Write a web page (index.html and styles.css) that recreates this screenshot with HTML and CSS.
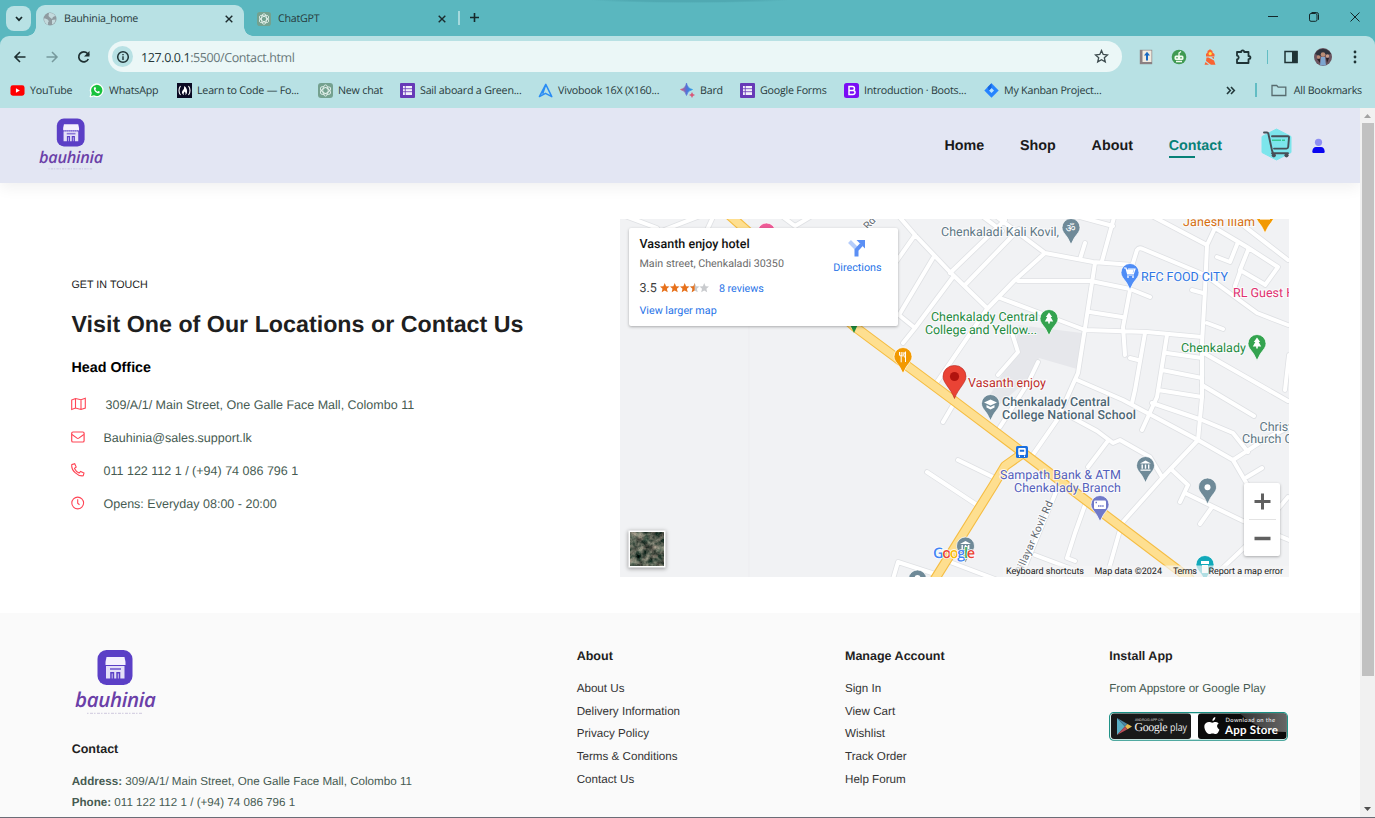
FILE: index.html
```html
<!DOCTYPE html>
<html lang="en">
<head>
<meta charset="utf-8">
<title>Bauhinia_home</title>
<link rel="stylesheet" href="styles.css">
</head>
<body>
<svg class="defs" width="0" height="0" aria-hidden="true">
  <symbol id="logo" viewBox="0 0 84 68">
    <rect x="23.500" y="2" width="35" height="35" rx="9" fill="#5b3fc6"/>
    <path d="M32.500 9h18l1 5v3h-20v-3z" fill="#f4f0fd"/>
    <path d="M32 18h18.500v12.500h-4.200v-6.500h-4v6.500h-2.100v-6.500h-4v6.500H32z" fill="#e4dff8"/>
    <path d="M31.500 17.500h20" stroke="#5b3fc6" stroke-width="1" stroke-dasharray="1.500 1"/>
    <path d="M36 21h11" stroke="#8a76d8" stroke-width="2"/>
    <path d="M38.200 25.500v5M44.300 25.500v5" stroke="#cfc6f1" stroke-width="1"/>
    <text x="1" y="58.500" class="logo-word" textLength="81" lengthAdjust="spacing">bauhinia</text>
    <path d="M13 65.300h56" stroke="#8e7fb5" stroke-width="1" stroke-dasharray="1.500 1.500 3 1" opacity=".4"/>
  </symbol>
  <symbol id="openai" viewBox="0 0 15 15">
    <rect width="15" height="15" rx="3" fill="#74a18f"/>
    <g fill="none" stroke="#e6f3ee" stroke-width=".9"><ellipse cx="7.500" cy="7.500" rx="2.700" ry="5.600"/><ellipse cx="7.500" cy="7.500" rx="2.700" ry="5.600" transform="rotate(60 7.500 7.500)"/><ellipse cx="7.500" cy="7.500" rx="2.700" ry="5.600" transform="rotate(120 7.500 7.500)"/></g>
  </symbol>
  <symbol id="forms" viewBox="0 0 15 15">
    <rect width="15" height="15" rx="1" fill="#673ab7"/><path d="M3 3h9v9H3z" fill="#f3effb"/>
    <path d="M3 5.700h9M3 8.700h9M5.300 3v9" stroke="#673ab7" stroke-width=".8"/>
  </symbol>
  <symbol id="close" viewBox="0 0 10 10"><path d="M1.700 1.700l6.600 6.600M8.300 1.700l-6.600 6.600" stroke="#1c2b2d" stroke-width="1.400"/></symbol>
  <symbol id="pin" viewBox="-10 -10 20 28">
    <path d="M0-9a9 9 0 0 1 9 9c0 5-5 8-7 13L0 17l-2-4C-4 8-9 5-9 0a9 9 0 0 1 9-9z"/>
  </symbol>
</svg>

<div class="window">
  <div class="tabstrip">
    <button class="tab-search"><svg width="10" height="8" viewBox="0 0 10 8"><path d="M2 2l3 3.200L8 2" fill="none" stroke="#17282a" stroke-width="1.700"/></svg></button>
    <div class="tab tab-active">
      <svg width="14" height="14" viewBox="0 0 14 14"><circle cx="7" cy="7" r="6.500" fill="#8f9ba0"/><path d="M1 6.500c2 0 3 .5 4 1.500s1 1.500 0 2.500v2.500C2.500 12 1 9.500 1 6.500zM6 1c3-.5 5 .5 6.300 3L10 5 9 7 7 5.500 5.500 4z M9 8l3.500-.5C12.500 10 11 12 9 12.500z" fill="#c3dadd"/></svg>
      <span class="tab-name">Bauhinia_home</span>
      <svg width="10" height="10"><use href="#close"/></svg>
    </div>
    <div class="tab">
      <svg width="14" height="14"><use href="#openai"/></svg>
      <span class="tab-name">ChatGPT</span>
      <svg width="10" height="10"><use href="#close"/></svg>
    </div>
    <span class="tab-sep"></span>
    <svg class="new-tab" width="11" height="11" viewBox="0 0 11 11"><path d="M5.500 1v9M1 5.500h9" stroke="#16292b" stroke-width="1.600"/></svg>
    <div class="win-buttons">
      <svg width="10" height="12" viewBox="0 0 10 12"><path d="M0 5.500h10" stroke="#14282a" stroke-width="1"/></svg>
      <svg width="10" height="12" viewBox="0 0 10 12"><rect x=".5" y="2.500" width="7.500" height="7.800" rx="1.500" fill="none" stroke="#14282a"/><path d="M2.500 1.500h5Q9.500 1.500 9.500 3.500v5.300" fill="none" stroke="#14282a"/></svg>
      <svg width="10" height="12" viewBox="0 0 10 12"><path d="M.5 1.500l9 9M9.500 1.500l-9 9" stroke="#14282a" stroke-width="1"/></svg>
    </div>
  </div>

  <div class="toolbar">
    <div class="nav-buttons">
      <svg width="14" height="14" viewBox="0 0 14 14"><path d="M12.500 7H2M7 2L2 7l5 5" fill="none" stroke="#1d2f31" stroke-width="1.600"/></svg>
      <svg width="14" height="14" viewBox="0 0 14 14"><path d="M1.500 7H12M7 2l5 5-5 5" fill="none" stroke="#76999c" stroke-width="1.500"/></svg>
      <svg width="14" height="14" viewBox="0 0 14 14"><path d="M11.300 9A5 5 0 1 1 10.500 3.500L12 5" fill="none" stroke="#1d2f31" stroke-width="1.700"/><path d="M12.500 1v5.500H7z" fill="#1d2f31"/></svg>
    </div>
    <div class="omnibox">
      <span class="info"><svg width="14" height="14" viewBox="0 0 14 14"><circle cx="7" cy="7" r="5.300" fill="none" stroke="#1f3335" stroke-width="1.500"/><path d="M7 6.300v3.700M7 4v1.300" stroke="#1f3335" stroke-width="1.400"/></svg></span>
      <span class="url"><b>127.0.0.1</b>:5500/Contact.html</span>
      <svg width="15" height="15" viewBox="0 0 15 15"><path d="M7.500 1.500l1.700 4 4.300.4-3.200 2.800 1 4.200-3.800-2.200-3.800 2.200 1-4.200L1.500 5.900l4.300-.4z" fill="none" stroke="#3e4c4f" stroke-width="1.300"/></svg>
    </div>
    <div class="extensions">
      <svg width="14" height="16" viewBox="0 0 14 16"><rect x=".8" y=".8" width="12.400" height="14.400" fill="#8b8083"/><rect x="3.500" y="1.500" width="9" height="11.500" fill="#f0ebe0"/><path d="M8 5v6.500" stroke="#1769c2" stroke-width="2"/><path d="M8 2.700l3 3.800H5z" fill="#1769c2"/></svg>
      <svg width="16" height="16" viewBox="0 0 16 16"><circle cx="8" cy="8" r="7.300" fill="#3f9a52"/><rect x="3.500" y="6.500" width="9" height="4.500" rx="1.500" fill="#f2fbf1"/><path d="M8 7V4l2-1.500M5 12.500h6" stroke="#f2fbf1" stroke-width="1.300" fill="none"/><path d="M6 8v1.500M10 8v1.500" stroke="#3f9a52" stroke-width="1.300"/></svg>
      <svg width="12" height="16" viewBox="0 0 12 16"><path d="M6 .3L8.500 2v1.500L10.500 5v2.500H2V5l1.500-1.500V2zM2.500 8.500h2l5.500 3 1.500 4.200H7L2 12zM10 8v2L7.500 8.500zM1.500 13l3.500 2.700H.5z" fill="#fa6432"/><circle cx="6.200" cy="4.700" r="1.600" fill="#ffe14a"/></svg>
      <svg width="17" height="16" viewBox="0 0 17 16"><path d="M2 3h4.200c0-2.200 3-2.200 3 0h4.300v4c2.600 0 2.600 3.200 0 3.200V14H2v-3.600c2.300-.2 2.300-3.600 0-3.800z" fill="none" stroke="#1f3335" stroke-width="1.800" stroke-linejoin="round"/></svg>
      <span class="bar-sep"></span>
      <svg width="14" height="14" viewBox="0 0 14 14"><rect x="1" y="1.500" width="12" height="11" fill="none" stroke="#1f3335" stroke-width="1.500"/><rect x="8" y="1" width="5.500" height="12" fill="#1f3335"/></svg>
      <svg width="18" height="18" viewBox="0 0 18 18"><circle cx="9" cy="9" r="9" fill="#6b5560"/><path d="M1 6a9 9 0 0 1 16 0l-4 1-3-2-4 3z" fill="#2f333d"/><circle cx="9" cy="6.500" r="2.300" fill="#b98d76"/><path d="M7 9h4l1 8.500H6z" fill="#7da5cf"/><circle cx="4.500" cy="9" r="1.800" fill="#ba8a74"/><circle cx="13.500" cy="8" r="1.700" fill="#c99f8a"/><path d="M3 11h3v4zM12 10h3l-2 5z" fill="#2a2126"/></svg>
      <svg width="4" height="14" viewBox="0 0 4 14"><g fill="#1f3335"><circle cx="2" cy="2" r="1.400"/><circle cx="2" cy="7" r="1.400"/><circle cx="2" cy="12" r="1.400"/></g></svg>
    </div>
  </div>

  <div class="bookmarks">
    <div class="bookmark-list">
      <span><svg width="15" height="15" viewBox="0 0 16 15"><rect x=".5" y="2" width="15" height="11" rx="2.500" fill="#f00"/><path d="M6.300 5l4.200 2.500-4.200 2.500z" fill="#fff"/></svg>YouTube</span>
      <span><svg width="15" height="15" viewBox="0 0 15 15"><path d="M1 14l1-3.600A6.500 6.500 0 1 1 4.600 13z" fill="#fff" stroke="#fff"/><path d="M2 13l.8-3A5.600 5.600 0 1 1 5 12.300z" fill="#17c23c"/><path d="M5 4.500c-1 3 2.700 6.300 5.200 5.800l.8-1.500-1.700-.9-.8.800C7.500 8.300 6.700 7.500 6.400 6.500l.7-.8-.7-1.600z" fill="#fff"/></svg>WhatsApp</span>
      <span><svg width="15" height="15" viewBox="0 0 15 15"><rect width="15" height="15" fill="#0a0a23"/><path d="M3.500 3c-2 2.500-2 6.500 0 9M11.500 3c2 2.500 2 6.500 0 9" fill="none" stroke="#fff" stroke-width="1.100"/><path d="M7.300 3c2 1.500 3.400 4 2.600 7q-.5 1.500-1.500 2 .8-2-.6-3.500-2 1.500-.8 3.500Q4 10.500 5.300 8 7.500 6 7.300 3z" fill="#fff"/></svg>Learn to Code — Fo...</span>
      <span><svg width="15" height="15"><use href="#openai"/></svg>New chat</span>
      <span><svg width="15" height="15"><use href="#forms"/></svg>Sail aboard a Green...</span>
      <span><svg width="15" height="15" viewBox="0 0 16 15"><path d="M8.300 1L1.500 14l6.500-3.500L14.700 14zM8.300 1L5 11" fill="none" stroke="#2a8cf4" stroke-width="1.600" stroke-linejoin="round"/></svg>Vivobook 16X (X160...</span>
      <span><svg width="15" height="15" viewBox="0 0 15 15"><defs><linearGradient id="bard"><stop offset="0" stop-color="#e8566a"/><stop offset=".5" stop-color="#5571d8"/><stop offset="1" stop-color="#1c9be8"/></linearGradient></defs><path d="M6.500 0q1 5.500 6 6.500-5 1-6 6Q5.500 7.500.5 6.500q5-1 6-6.500z" fill="url(#bard)" stroke="url(#bard)" stroke-width=".7"/><path d="M12 9q.5 2.500 3 3-2.500.5-3 3-.5-2.500-3-3 2.500-.5 3-3z" fill="#d9587a"/></svg>Bard</span>
      <span><svg width="15" height="15"><use href="#forms"/></svg>Google Forms</span>
      <span><svg width="15" height="15" viewBox="0 0 15 15"><rect width="15" height="15" rx="2.500" fill="#7a0df5"/><path d="M5 3.500h3.500a1.900 1.900 0 0 1 0 3.900H5zm0 3.900h4a2 2 0 0 1 0 4.100H5z" fill="none" stroke="#fff" stroke-width="1.500"/></svg>Introduction · Boots...</span>
      <span><svg width="15" height="15" viewBox="0 0 15 15"><path d="M7.500.3l7.200 7.200-7.200 7.200L.3 7.500z" fill="#2684ff"/><path d="M7.500 5l2.500 2.500L7.500 10 5 7.500z" fill="#b8e2ff"/><path d="M7.500.3v4.700L5 7.500 3.500 4.300z" fill="#1766dd"/></svg>My Kanban Project...</span>
    </div>
    <svg class="more" width="10" height="9" viewBox="0 0 10 9"><path d="M1 1l3.300 3.500L1 8M5 1l3.300 3.500L5 8" fill="none" stroke="#22383a" stroke-width="1.600"/></svg>
    <span class="bar-sep"></span>
    <span class="all"><svg width="16" height="13" viewBox="0 0 16 13"><path d="M1 1.500h4.700l1.500 1.700h7.600v8.300H1z" fill="none" stroke="#566b6e" stroke-width="1.300"/></svg>All Bookmarks</span>
  </div>

  <div class="viewport">
    <div class="page">
      <header class="site-header">
        <svg class="logo-small"><use href="#logo"/></svg>
        <nav>
          <a>Home</a><a>Shop</a><a>About</a><a class="current">Contact</a>
          <svg class="cart" width="31" height="33" viewBox="0 0 31 33"><path d="M15.500 1L30 8.500v16L15.500 32 1 24.500v-16z" fill="#7ce5ec" stroke="#7ce5ec" stroke-linejoin="round"/><g fill="none" stroke="#474f57" stroke-width="1.900" stroke-linecap="round" stroke-linejoin="round"><path d="M3 4.500h3q1 0 1.300 1L10.500 20q.3 2.500 1.500 5M11 8.300H27q1.200 0 1 1.200L27.200 19q-.2 1.600-1.700 1.600H13M11 25.300h16"/></g><path d="M11 12.300H24" stroke="#35c693" stroke-width="1.500" stroke-dasharray="9 1"/><circle cx="12.800" cy="27.300" r="2.100" fill="#474f57"/><circle cx="25.500" cy="27.300" r="2.100" fill="#474f57"/></svg>
          <svg class="user" width="13" height="16" viewBox="0 0 13 16"><circle cx="6.500" cy="4.300" r="3.600" fill="#8f8ff2"/><path d="M.3 13.800C.3 10.500 2 9 4 9h5c2 0 3.700 1.500 3.700 4.800q0 1.200-1.200 1.200h-10Q.3 15 .3 13.800z" fill="#0a05f0"/></svg>
        </nav>
      </header>

      <main class="contact">
        <section class="details">
          <span class="eyebrow">GET IN TOUCH</span>
          <h2>Visit One of Our Locations or Contact Us</h2>
          <h3>Head Office</h3>
          <ul>
            <li><svg width="15" height="14" viewBox="0 0 15 14"><path d="M.7 3L4.500 1.500 10 2.800 14.300 1.200v9.800L10 12.500 4.500 11 .7 12.500zM4.500 1.500V11M10 2.800v9.700" fill="none" stroke="#ff4656" stroke-width="1.100"/></svg>309/A/1/ Main Street, One Galle Face Mall, Colombo 11</li>
            <li><svg width="14" height="14" viewBox="0 0 14 14"><rect x=".7" y="2" width="12.400" height="10" rx="1.300" fill="none" stroke="#ff4656" stroke-width="1.200"/><path d="M1 4.500l5 3.600q.9.700 1.800 0l5-3.600" fill="none" stroke="#ff4656" stroke-width="1.100"/></svg>Bauhinia@sales.support.lk</li>
            <li><svg width="14" height="14" viewBox="0 0 14 14"><path d="M.8 1.600l2.900-.9 1.500 3.300-1.700 1.400q1.400 3.100 4.600 4.700l1.500-1.700 3.400 1.600-.8 2.800C6.800 13.600-.2 7.300.8 1.600z" fill="none" stroke="#ff4656" stroke-width="1.100"/></svg>011 122 112 1 / (+94) 74 086 796 1</li>
            <li><svg width="14" height="14" viewBox="0 0 14 14"><circle cx="6.700" cy="7" r="5.900" fill="none" stroke="#ff4656" stroke-width="1.100"/><path d="M6.700 3.200v4.100l1.800 1.400" fill="none" stroke="#ff4656" stroke-width="1.100"/></svg>Opens: Everyday 08:00 - 20:00</li>
          </ul>
        </section>

        <section class="map">
          <svg class="map-canvas" viewBox="620 219 668.500 358">
            <defs>
              <filter id="terrain" x="0" y="0" width="1" height="1" color-interpolation-filters="sRGB"><feTurbulence type="fractalNoise" baseFrequency=".15" numOctaves="4" seed="8"/><feColorMatrix values="1 .2 0 0 -.26  .8 .3 0 0 -.18  .75 .25 0 0 -.18  0 0 0 0 1"/></filter>
              <g id="roads">
                <path d="M625 216l32 12M700 216l-36 14M713 217l-6 13M783 217l12 9 15-9"/>
                <path d="M896 213l19 22 35 37 37 36M915 235l-19 27M933 258l-34 57 16 13M953 277l-38 51-12 15M950 273l55-53M965 285l54-56M978 213l24 18M993 214l52 39 48 9 40 3M1045 253l-30 27-28 29-50 73M1000 298l40 15 45 17 62 2 55 5M1018 281h73l39 8 20 8M1076 216l37 10M1115 214l-13 47M1085 243l-5 16M1095 263l-10 65-7 45-21 47-25 36M1130 290l-7 37 2 28M1090 312l32 5"/>
                <path d="M1133 263l4-13q2-3 6-1l62 26 52 38 31 12M1150 215l57 30M1203 217l12 11 32 19 31 20-13 18M1226 212l62 48M1215 228l-8 17-2 45-3 53v54l-4 43M1192 290l11 3M1207 323l16 6M1238 242l-8 20-13-5M1248 250l-8 20 24 14M1240 272l-5 14"/>
                <path d="M1145 333l-10 57-3 13M1130 358l8 2M1167 335l-10 62-15 33M1167 353l35 5M1162 370l40 8M1158 390l44 7M1202 352l86 49M1202 385l52 31M1289 355l-4 35"/>
                <path d="M1077 380l46 20 75 40 35 20 14 24M1233 460l34-22 21-10M1247 477l15-9M1152 403l50 17 31 13 15 19M1073 418l24 13 16 12 7-3 30 17 12 20M1107 442l-19 25M1198 440l-36 38-40 45-16 56M1172 470l16 15-8 17M1185 493l58 28 46 19M1212 507l-12 17M1249 543l-38 36M1288 497l-10 12"/>
                <path d="M1085 505l-10 28-8 25 8 3M1035 555l45 17M1058 487l-38 92M958 460l35 17M927 472l50 33M953 405l-10 17M1012 333l6 19-20 23M1038 362l-10 21-28 44M893 579l5-17 37 12M950 562l45 17"/>
              </g>
            </defs>
            <rect x="619" y="219" width="671" height="358" fill="#f1f2f4"/>
            <path d="M749 219v358" stroke="#ebecee" stroke-width=".7"/>
            <path d="M1018 325l64 8-5 36-38-11-9 20-30 26-12-6 28-46z" fill="#e6e7eb"/>
            <g fill="none" stroke-linecap="round" stroke-linejoin="round">
              <use href="#roads" stroke="#dfe1e4" stroke-width="5.600"/><use href="#roads" stroke="#fff" stroke-width="4"/>
              <path d="M727 213L855 327l98 73 69 52 78 59 90 68M1022 454l-17 12-12 20-58 93" stroke="#f5bd43" stroke-width="10"/>
              <path d="M727 213L855 327l98 73 69 52 78 59 90 68M1022 454l-17 12-12 20-58 93" stroke="#fedf90" stroke-width="7.800"/>
            </g>
            <g stroke="#fff" stroke-width=".7">
              <use href="#pin" x="756.500" y="222" width="20" height="28" fill="#ee5c97"/>
              <use href="#pin" x="1061" y="217.500" width="20" height="28" fill="#6f8a98"/>
              <use href="#pin" x="1255" y="206" width="20" height="28" fill="#f29900"/>
              <use href="#pin" x="1120" y="262.500" width="20" height="28" fill="#4f8df6"/>
              <use href="#pin" x="1039" y="308.500" width="20" height="28" fill="#34a34f"/>
              <use href="#pin" x="1247" y="333.500" width="20" height="28" fill="#34a34f"/>
              <use href="#pin" x="893" y="346.500" width="20" height="28" fill="#f29900"/>
              <use href="#pin" x="980.500" y="393.500" width="20" height="28" fill="#6f8a98"/>
              <use href="#pin" x="1135.500" y="455.500" width="20" height="28" fill="#6f8a98"/>
              <use href="#pin" x="1197.500" y="477" width="20" height="28" fill="#6f8a98"/>
              <use href="#pin" x="1090" y="494.500" width="20" height="28" fill="#7079c8"/>
              <use href="#pin" x="955.500" y="536" width="20" height="28" fill="#6f8a98"/>
              <use href="#pin" x="1195" y="554.500" width="20" height="28" fill="#12a9ba"/>
              <use href="#pin" x="907.500" y="569" width="20" height="28" fill="#6f8a98"/>
            </g>
            <path d="M849 322h10l-5 11z" fill="#1e8e3e"/>
            <g fill="#fff">
              <path d="M1124 268h2l1.500 5.500h6l1.500-4.500h-7M1127 275h7" fill="none" stroke="#fff" stroke-width="1.200"/><path d="M1126.500 269.500h7.500l-1.500 4h-5z"/><circle cx="1128" cy="277" r=".9"/><circle cx="1133" cy="277" r=".9"/>
              <path id="tree" d="M1049 312.500l3.200 4.500h-1.500l2.500 4.500h-3.400v2h-1.600v-2h-3.400l2.500-4.500h-1.500z"/><use href="#tree" x="208" y="25"/>
              <path d="M1260 218h10v1.600h-10z"/>
              <path d="M899.500 352v3.300q1.700 1.500 1.700 0v7M901.200 352v4M903 352v3.300q0 .7-1 1M905.500 362v-4.500q-1.800 0-1.600-2.700.2-2.500 1.600-3z" stroke="#fff" stroke-width="1" fill="none"/>
              <path d="M984 402.500l6.500-3 6.500 3-6.500 3zM986.500 405l4 2 4-2v2.500l-4 2-4-2z"/>
              <path id="temple" d="M1140 463.500l5.500-3 5.500 3zM1140.500 469.500h10v1.200h-10zM1141.500 464.500h1.400v4.300h-1.400zM1144.800 464.500h1.400v4.300h-1.400zM1148 464.500h1.400v4.300h-1.400z"/><use href="#temple" x="-180" y="80.500"/>
              <circle cx="1207.500" cy="487.300" r="3"/>
              <rect x="1094" y="500.500" width="12" height="8.500" rx="1"/>
              <path d="M1201 561h8v3h-8zM1202 565h6v8h-6z"/><circle cx="917.500" cy="578" r="3"/>
            </g>
            <path d="M1095.500 502.500h1.500M1098 506h6" stroke="#7079c8" stroke-width="1.300" stroke-dasharray="1.500 .6"/>
            <text class="om" x="1065.500" y="232">ॐ</text>
            <g transform="translate(954.500 376)"><path d="M0-10.500a11 11 0 0 1 11.500 11C11.500 7 4 12 0 22.500-4 12-11.500 7-11.500.5A11 11 0 0 1 0-10.500z" fill="#ea4335" stroke="#b3261e" stroke-width=".6"/><circle cy=".5" r="4.600" fill="#b1130f"/></g>
            <rect x="1016" y="446" width="12" height="12" rx="1.500" fill="#1a6fe0"/><path d="M1018.800 448.500h6.400v6h-6.400zM1019.500 455.500v1.500M1024.500 455.500v1.500" fill="#fff" stroke="#fff"/><path d="M1019.800 449.700h4.400v2h-4.400z" fill="#1a6fe0"/>
            <g class="labels">
              <text x="941" y="236" fill="#5e7784" textLength="118">Chenkaladi Kali Kovil,</text>
              <text x="1183" y="226" fill="#d56e0c" textLength="72">Janesh Illam</text>
              <text x="1141" y="281" fill="#2f76e4" textLength="87">RFC FOOD CITY</text>
              <text x="1233" y="297" fill="#e0306f">RL Guest House</text>
              <text x="931" y="321" fill="#238a40" textLength="107">Chenkalady Central</text>
              <text x="925" y="334" fill="#238a40" textLength="112">College and Yellow...</text>
              <text x="1181" y="352" fill="#238a40" textLength="65">Chenkalady</text>
              <text x="968" y="387" fill="#bd2d29" textLength="78">Vasanth enjoy</text>
              <g class="medium" fill="#4e6775"><text x="1002" y="406" textLength="108">Chenkalady Central</text><text x="1002" y="419" textLength="134">College National School</text></g>
              <text x="1259.500" y="431" fill="#5e7784">Christ</text><text x="1242" y="443" fill="#5e7784">Church Chenkalady</text>
              <text x="1000" y="479" fill="#5460bb" textLength="121">Sampath Bank &amp; ATM</text>
              <text x="1014" y="492" fill="#5460bb" textLength="107">Chenkalady Branch</text>
              <text class="road" transform="translate(1021 575) rotate(-66)" textLength="79">Pillayar Kovil Rd</text>
              <text class="road" transform="translate(868 230) rotate(-48)">Rd</text>
            </g>
            <text class="google" x="933" y="558" textLength="42"><tspan fill="#4285f4">G</tspan><tspan fill="#ea4335">o</tspan><tspan fill="#fbbc05">o</tspan><tspan fill="#4285f4">g</tspan><tspan fill="#34a853">l</tspan><tspan fill="#ea4335">e</tspan></text>
            <rect x="1003" y="565.500" width="287" height="11.500" fill="#f5f5f5" opacity=".7"/>
            <g class="legal"><text x="1006" y="574" textLength="78">Keyboard shortcuts</text><text x="1094.500" y="574" textLength="67.500">Map data ©2024</text><text x="1173" y="574" textLength="24">Terms</text><text x="1208.500" y="574" textLength="74.500">Report a map error</text></g>
          </svg>
          <div class="place">
            <div class="place-text">
              <strong>Vasanth enjoy hotel</strong>
              <span class="addr">Main street, Chenkaladi 30350</span>
              <span class="rating"><b>3.5</b>
                <svg width="49" height="10" viewBox="0 0 49 10"><defs><path id="st" d="M4.700 0l1.400 3.200 3.400.3-2.600 2.300.8 3.400-3-1.800-3 1.800.8-3.400L0 3.500l3.400-.3z"/><clipPath id="half"><path d="M0 0h34.600v10H0z"/></clipPath></defs><g fill="#c9cbce"><use href="#st" x="30"/><use href="#st" x="39.500"/></g><g fill="#e7711b" clip-path="url(#half)"><use href="#st"/><use href="#st" x="10"/><use href="#st" x="20"/><use href="#st" x="30"/></g></svg>
                <a>8 reviews</a></span>
              <a class="larger">View larger map</a>
            </div>
            <div class="directions"><svg width="18" height="18" viewBox="0 0 18 18"><path d="M1.500 2.500L8 9" stroke="#b5cdfb" stroke-width="4"/><path d="M8.500 17.500V11L13.500 5.500" fill="none" stroke="#5b8ff5" stroke-width="4"/><path d="M8.500 1H17v8.500z" fill="#5b8ff5"/></svg><a>Directions</a></div>
          </div>
          <svg class="satellite" width="34" height="34"><rect width="34" height="34" filter="url(#terrain)"/></svg>
          <div class="zoom"><svg width="17" height="17" viewBox="0 0 17 17"><path d="M8.500.5v16M.5 8.500h16" stroke="#606060" stroke-width="3"/></svg><i></i><svg width="17" height="17" viewBox="0 0 17 17"><path d="M.5 8.500h16" stroke="#606060" stroke-width="3.500"/></svg></div>
        </section>
      </main>

      <footer class="site-footer">
        <div class="col">
          <svg class="logo-large"><use href="#logo"/></svg>
          <h4>Contact</h4>
          <p><strong>Address:</strong> 309/A/1/ Main Street, One Galle Face Mall, Colombo 11</p>
          <p><strong>Phone:</strong> 011 122 112 1 / (+94) 74 086 796 1</p>
        </div>
        <div class="col links"><h4>About</h4><a>About Us</a><a>Delivery Information</a><a>Privacy Policy</a><a>Terms &amp; Conditions</a><a>Contact Us</a></div>
        <div class="col links"><h4>Manage Account</h4><a>Sign In</a><a>View Cart</a><a>Wishlist</a><a>Track Order</a><a>Help Forum</a></div>
        <div class="col install"><h4>Install App</h4><p>From Appstore or Google Play</p>
          <svg width="179" height="29" viewBox="0 0 179 29">
            <defs><linearGradient id="gloss" x1="0" x2="1"><stop offset="0" stop-color="#333"/><stop offset="1" stop-color="#666"/></linearGradient></defs>
            <rect x=".6" y=".6" width="177.800" height="27.600" rx="4" fill="#fff" stroke="#188f83" stroke-width="1.100"/>
            <rect x="2" y="1.500" width="80" height="25.500" rx="3" fill="#191919"/>
            <rect x="89" y="1.500" width="88.500" height="25.500" rx="3" fill="#0b0b0b"/>
            <path d="M131 1.500h43.500a3 3 0 0 1 3 3V20Q150 20 131 1.500z" fill="url(#gloss)"/>
            <path d="M8 6v17l8-8.500z" fill="#5aaec4"/><path d="M8 6l10.500 6-2.500 2.500z" fill="#4b87a4"/><path d="M18.500 12l4.500 2.500-4.500 2.700-2.500-2.700z" fill="#e7bb50"/><path d="M8 23l10.500-5.800L16 14.500z" fill="#b84e57"/>
            <text class="badge-tiny" x="26" y="8.500" textLength="28" lengthAdjust="spacingAndGlyphs">ANDROID APP ON</text>
            <text class="badge-google" x="25.500" y="19" textLength="33">Google</text><text class="badge-play" x="61" y="19" textLength="17" lengthAdjust="spacingAndGlyphs">play</text>
            <path d="M106.500 8.500q-.2-3.200 2.800-4 .2 3.200-2.800 4zM103 9.500c1.500 0 2 .7 3.300.7s2-.8 3.700-.6q1.800.2 2.600 1.400-3.500 2.500.8 6.200c-1 2.500-2.200 4.400-3.700 4.400-1.200 0-1.800-.7-3.200-.7s-2 .8-3.100.7C100 21.500 96 13 100 10.500q1.300-1 3-1z" transform="translate(-3 .5)" fill="#fff"/>
            <text class="badge-small" x="116.500" y="9.500" textLength="49.500">Download on the</text>
            <text class="badge-store" x="116" y="21.500" textLength="53">App Store</text>
          </svg>
        </div>
      </footer>
    </div>
    <div class="scrollbar"><svg width="7" height="4"><path d="M0 4l3.500-4L7 4z" fill="#a3a3a3"/></svg><div class="thumb"></div><svg width="7" height="4"><path d="M0 0l3.500 4L7 0z" fill="#505050"/></svg></div>
  </div>
</div>
</body>
</html>
```
FILE: styles.css
```css
* { box-sizing: border-box; margin: 0; padding: 0; }
body { font-family: "Liberation Sans", Arial, sans-serif; text-rendering: geometricPrecision; overflow: hidden; }
svg { display: block; flex: none; }
.defs { position: absolute; }
.window { width: 1375px; height: 818px; display: flex; flex-direction: column; background: #5ab7bf; border-bottom: 1px solid #6b6d77; }
.logo-word { font: italic 600 20.500px "Open Sans", sans-serif; fill: #6b3fa8; }

/* Browser frame */
.tabstrip, .toolbar, .bookmarks { font-family: "Open Sans", "Noto Sans", sans-serif; color: #283b3d; flex: none; }
.tabstrip { height: 36px; padding: 5px 15px 0 6px; display: flex; background: radial-gradient(ellipse 100px 3px at 690px 0, #50a9b2 60%, transparent) #5ab7bf; }
.tab-search { width: 25px; height: 25px; margin-top: 1px; border: 0; border-radius: 8px; background: #b8e1e4; display: flex; align-items: center; justify-content: center; }
.tab { width: 208px; margin-left: 5px; padding: 1px 10px 5px 7px; display: flex; align-items: center; font-size: 10.700px; }
.tab + .tab { width: 208px; padding-left: 8px; }
.tab-active { background: #b8e1e4; border-radius: 9px 9px 0 0; position: relative; }
.tab-active::before, .tab-active::after { content: ""; position: absolute; bottom: 0; width: 9px; height: 9px; }
.tab-active::before { left: -9px; background: radial-gradient(circle at 0 0, transparent 8.500px, #b8e1e4 9px); }
.tab-active::after { right: -9px; background: radial-gradient(circle at 100% 0, transparent 8.500px, #b8e1e4 9px); }
.tab-name { flex: 1; margin-left: 7px; letter-spacing: -.26px; }
.tab-sep { width: 1.500px; height: 14px; margin: 6px 0 0 1px; background: #a5d9dd; }
.new-tab { margin: 7px 0 0 9px; }
.win-buttons { margin: 6px 0 0 auto; display: flex; gap: 31px; }
.toolbar { height: 36px; padding: 5px 18px 0 13px; display: flex; background: #b8e1e4; border-radius: 9px 9px 0 0; }
.nav-buttons { display: flex; gap: 18px; align-items: center; width: 95px; }
.omnibox { width: 1014px; height: 31px; border-radius: 16px; background: #ebf7f7; display: flex; align-items: center; padding: 0 13px 0 4px; }
.info { width: 21px; height: 21px; border-radius: 50%; background: #b8e1e4; display: flex; align-items: center; justify-content: center; }
.url { flex: 1; margin-left: 8px; padding-top: 1px; font-size: 12.500px; letter-spacing: -.4px; color: #68777a; }
.url b { font-weight: 400; color: #26383a; }
.extensions { display: grid; grid-template-columns: 31.500px 33px 31.500px 31.500px 17px 30.500px 39px 4px; align-items: center; height: 31px; padding-left: 17px; }
.bar-sep { width: 1.500px; height: 14px; background: #62bdc4; }
.bookmarks { height: 36px; padding: 0 13px 0 10px; display: flex; align-items: center; background: #b8e1e4; font-size: 10.700px; letter-spacing: -.22px; white-space: nowrap; }
.bookmark-list { display: grid; grid-template-columns: 79px 88px 141px 82px 138px 142px 60px 104px 140px 150px; flex: 1; }
.bookmark-list span, .all { display: flex; align-items: center; gap: 5px; line-height: 15px; padding-top: 2px; }
.bookmark-list svg, .all svg { margin-top: -2px; }
.more { margin-right: 19px; }
.all { margin-left: 14px; gap: 7px; }

/* Site */
.viewport { flex: 1; display: flex; min-height: 0; background: #fff; }
.page { width: 1360px; flex: none; overflow: hidden; }
.site-header { height: 75px; padding: 0 35.500px 0 37.500px; background: #e3e6f3; box-shadow: 0 5px 14px rgba(0,0,0,.06); display: flex; align-items: center; justify-content: space-between; }
.logo-small { width: 67px; height: 54px; margin-bottom: 4px; }
.site-header nav { display: flex; align-items: center; font-size: 14.320px; font-weight: 700; color: #1a1a1a; }
nav a { margin-right: 35.800px; line-height: 25px; padding-top: 1px; }
nav .current { color: #088178; position: relative; margin-right: 38.500px; }
.current::after { content: ""; position: absolute; left: 0; bottom: 1px; width: 26px; height: 2px; background: #088178; }
.cart { margin-bottom: 2px; }
.user { margin-left: 20px; }
.contact { height: 430px; padding: 36px 71.500px 36px 71.500px; display: flex; justify-content: space-between; }
.details { padding-top: 60px; }
.eyebrow { display: block; font-size: 10.740px; line-height: 12px; color: #222; }
.details h2 { font-size: 23.270px; line-height: 32px; margin-top: 17px; color: #1f1f1f; }
.details h3 { font-size: 14.320px; line-height: 16px; margin-top: 20px; }
.details ul { margin-top: 12px; list-style: none; }
.details li { height: 33px; padding-top: 1px; display: flex; align-items: center; gap: 18.500px; font-size: 12.530px; color: #465b52; }
.details li svg { margin: 0 0 3px -.5px; }
.details li:first-child { gap: 19.500px; }
.map { position: relative; width: 668.500px; height: 358px; }
.map-canvas { width: 668.500px; height: 358px; }
.labels text { font: 12.500px Roboto, sans-serif; paint-order: stroke; stroke: #fff; stroke-opacity: .75; stroke-width: 2px; }
.labels .medium text { font-weight: 500; }
.labels .road { font-size: 10.500px; fill: #626970; }
.om { font: 11px "Noto Sans", sans-serif; fill: #fff; }
.google { font: 600 14.500px "Open Sans", sans-serif; paint-order: stroke; stroke: #fff; stroke-width: 1.500px; }
.legal { font: 9px Roboto, sans-serif; fill: #222; }
.place { position: absolute; left: 9px; top: 9px; width: 269px; height: 97.500px; padding: 8px 16.500px 0 10.500px; display: flex; justify-content: space-between; background: #fff; border-radius: 2px; box-shadow: 0 1px 3px rgba(0,0,0,.3); font-family: Roboto, sans-serif; font-size: 10.740px; }
.place a { color: #2874e8; }
.place-text { display: flex; flex-direction: column; }
.place strong { font-size: 12.530px; line-height: 17px; font-weight: 500; color: #111; }
.addr { line-height: 14px; margin-top: 4px; color: #6b6b6b; }
.rating { display: flex; align-items: center; height: 16px; margin-top: 9px; }
.rating b { font-size: 12.530px; font-weight: 400; color: #3c3c3c; margin-right: 3px; }
.rating a { margin-left: 10px; }
.larger { line-height: 14px; margin-top: 8px; }
.directions { display: flex; flex-direction: column; align-items: center; padding-top: 3px; gap: 4px; }
.satellite { position: absolute; left: 10px; top: 313px; box-shadow: 0 0 0 1.500px #fff, 0 1px 4px 2px rgba(0,0,0,.35); }
.zoom { position: absolute; right: 8.500px; top: 264px; width: 36px; height: 73px; background: #fff; border-radius: 2px; box-shadow: 0 1px 3px rgba(0,0,0,.3); display: flex; flex-direction: column; align-items: center; justify-content: space-evenly; }
.zoom i { width: 27px; height: 1px; background: #e3e3e3; }
.site-footer { height: 205px; padding: 36px 71px 0 71.700px; background: #fafafa; display: grid; grid-template-columns: 505px 268.300px 264.200px 179px; }
.site-footer h4 { font-size: 12.530px; line-height: 14px; color: #1f1f1f; }
.logo-large { width: 84px; height: 68px; margin: -1px 0 26px 2px; }
.site-footer p { font-size: 11.640px; line-height: 14px; color: #465b52; white-space: nowrap; }
.col h4 + p { margin-top: 19px; }
.col p + p { margin-top: 7px; }
.links { display: flex; flex-direction: column; font-size: 11.640px; color: #333; }
.links h4 { margin-bottom: 15.400px; }
.links a { line-height: 22.550px; }
.install svg { margin-top: 16px; }
.badge-tiny { font: 3.500px "Liberation Sans", sans-serif; fill: #ddd; }
.badge-google { font: 12px "Liberation Serif", serif; fill: #eee; }
.badge-play { font: 10.500px "Open Sans", sans-serif; fill: #eee; }
.badge-small { font: 500 5.800px Lato, sans-serif; fill: #eee; }
.badge-store { font: 700 11.500px Lato, sans-serif; fill: #fff; }
.scrollbar { width: 15px; background: #f1f1f1; display: flex; flex-direction: column; align-items: center; padding: 6px 0; }
.thumb { width: 12px; height: 553px; margin: 5px 0 auto; background: #c1c1c1; }
```
